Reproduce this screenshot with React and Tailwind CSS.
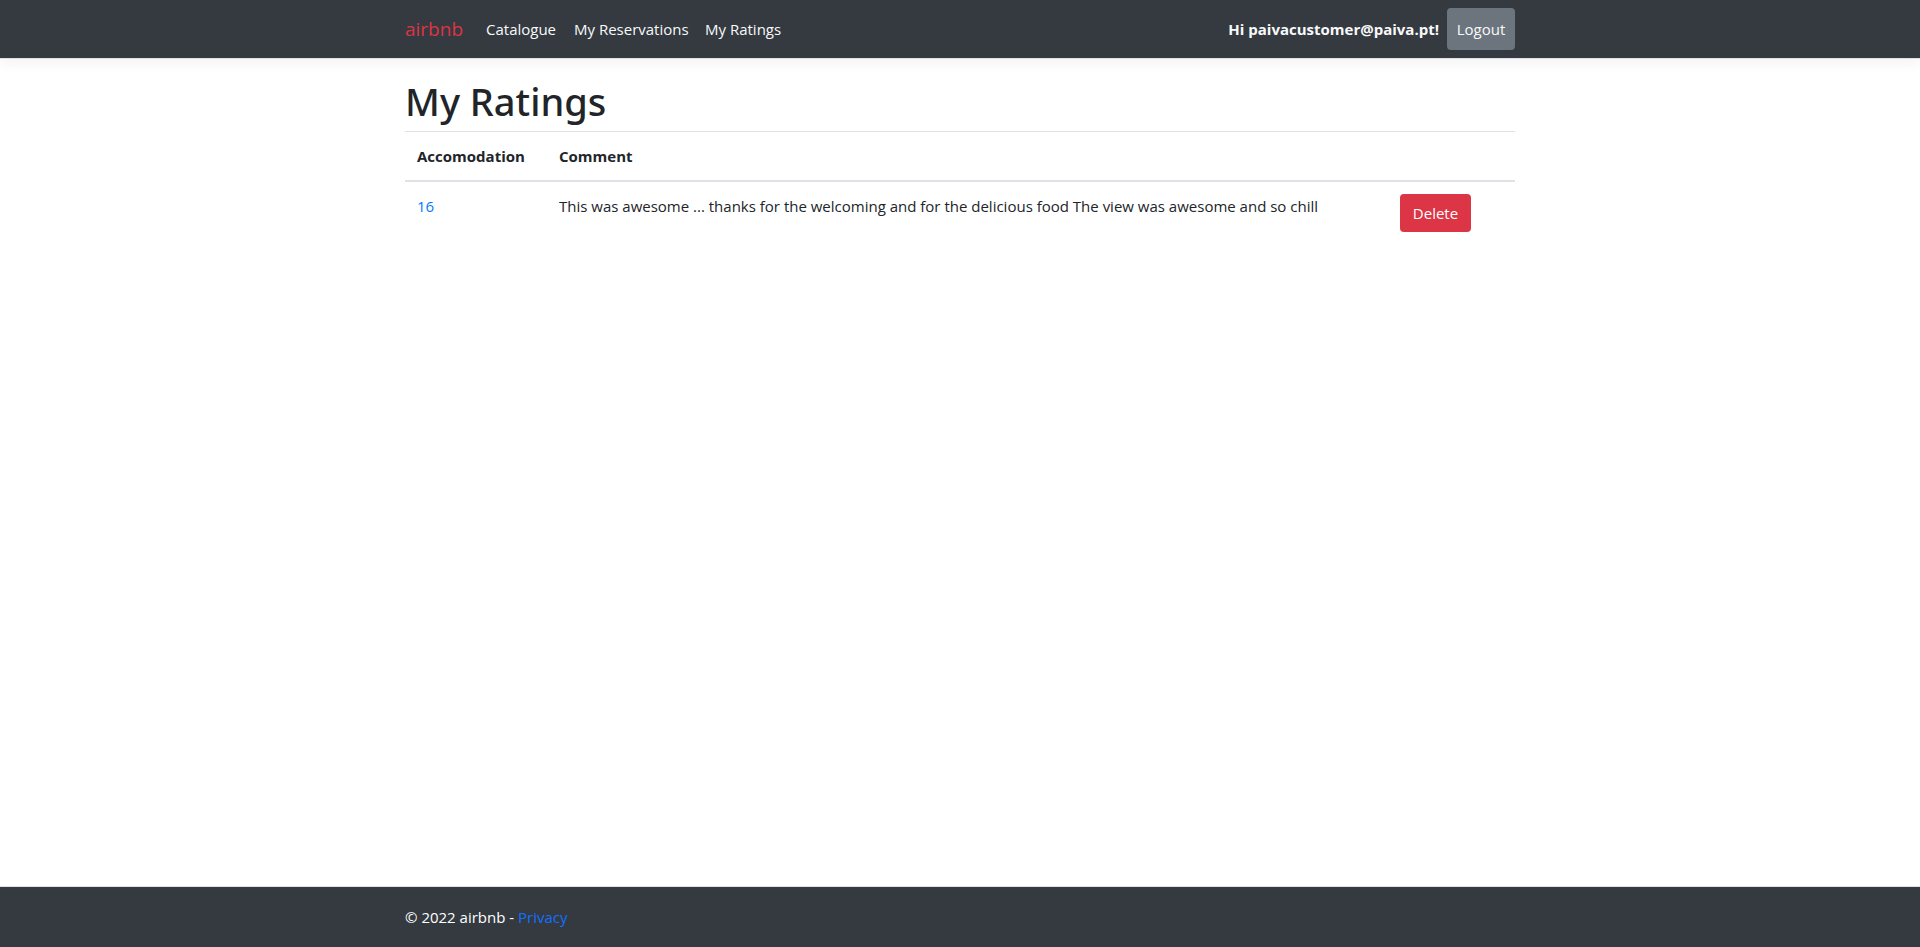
const navLinks = [
  { label: 'Catalogue', width: 'w-[88px]' },
  { label: 'My Reservations', width: 'w-[131px]' },
  { label: 'My Ratings', width: 'w-[95px]' },
];

const ratings = [
  {
    accommodation: 16,
    comment:
      'This was awesome ... thanks for the welcoming and for the delicious food The view was awesome and so chill',
  },
];

function Header() {
  return (
    <header className="border-b border-[#dee2e6] bg-[#343a40] shadow-[0_4px_12px_rgba(0,0,0,0.05)]">
      <div className="mx-auto flex max-w-[1140px] items-center px-[15px] py-2">
        <a href="#" className="w-[81px] text-[19px] leading-[30px] text-[#dc3545]">
          airbnb
        </a>
        <nav className="flex grow">
          {navLinks.map((link) => (
            <a
              key={link.label}
              href="#"
              className={`${link.width} whitespace-nowrap text-[#f8f9fa]`}
            >
              {link.label}
            </a>
          ))}
        </nav>
        <strong className="mr-2 font-bold whitespace-nowrap text-[#f8f9fa]">
          Hi paivacustomer@paiva.pt!
        </strong>
        <button
          type="button"
          className="h-[42px] w-[68px] rounded bg-[#6c757d] text-[#f8f9fa]"
        >
          Logout
        </button>
      </div>
    </header>
  );
}

function RatingsTable() {
  return (
    <table className="w-full table-fixed border-t border-[#dee2e6] text-left">
      <colgroup>
        <col className="w-[142px]" />
        <col />
        <col className="w-[127px]" />
      </colgroup>
      <thead>
        <tr className="border-b-2 border-[#dee2e6]">
          <th className="p-3 font-bold">Accomodation</th>
          <th className="p-3 font-bold">Comment</th>
          <th className="p-3" />
        </tr>
      </thead>
      <tbody>
        {ratings.map((rating) => (
          <tr key={rating.accommodation} className="align-top">
            <td className="p-3">
              <a href="#" className="text-[#007bff]">
                {rating.accommodation}
              </a>
            </td>
            <td className="p-3">{rating.comment}</td>
            <td className="p-3">
              <button
                type="button"
                className="block h-[38px] w-[71px] rounded bg-[#dc3545] text-white"
              >
                Delete
              </button>
            </td>
          </tr>
        ))}
      </tbody>
    </table>
  );
}

function Footer() {
  return (
    <footer className="border-t border-[#dee2e6] bg-[#343a40] text-white">
      <div className="mx-auto max-w-[1140px] px-[15px] leading-[60px]">
        &copy; 2022 airbnb -{' '}
        <a href="#" className="text-[#1370ff]">
          Privacy
        </a>
      </div>
    </footer>
  );
}

export default function App() {
  return (
    <div className="flex min-h-screen flex-col bg-white font-['Open_Sans','Noto_Sans',sans-serif] text-[15px] leading-6 text-[#212529]">
      <Header />
      <main className="mx-auto w-full max-w-[1140px] grow px-[15px] pt-4">
        <h1 className="pb-1 font-['Noto_Sans','Open_Sans',sans-serif] text-[38px] leading-[52px] font-medium">
          My Ratings
        </h1>
        <RatingsTable />
      </main>
      <Footer />
    </div>
  );
}
